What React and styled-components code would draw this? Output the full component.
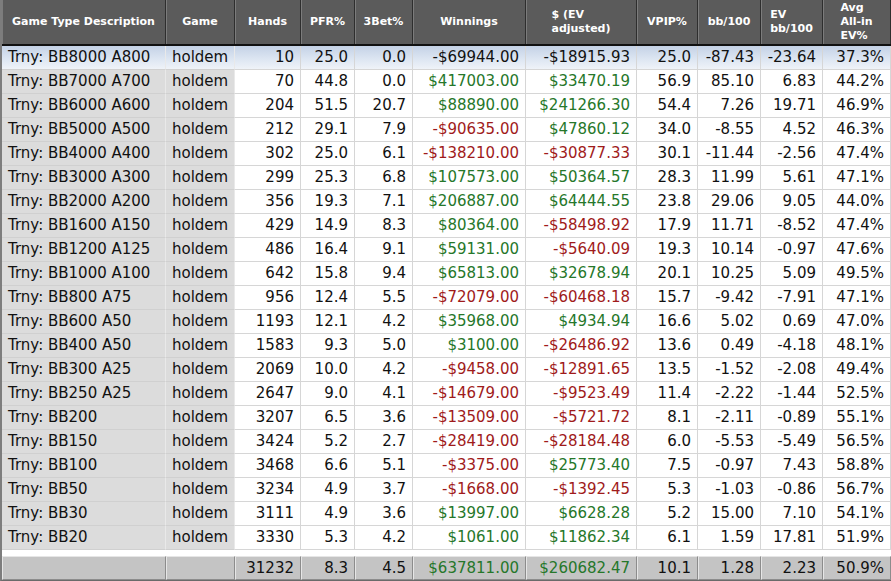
import React from 'react';
import styled, { createGlobalStyle, css } from 'styled-components';

const GlobalStyle = createGlobalStyle`
  html, body {
    margin: 0;
    padding: 0;
    background: #ffffff;
  }
  body {
    font-family: "DejaVu Sans", Verdana, sans-serif;
    overflow: hidden;
  }
`;

const COLS = '164px 69px 66px 54px 58px 113px 111px 61px 63px 62px 68px';

const TONES = {
  pos: '#26772a',
  neg: '#9f1b1b',
};

const Grid = styled.div`
  width: 891px;
  height: 581px;
  box-sizing: border-box;
  border-left: 2px solid #7d7d7d;
  border-bottom: 1px solid #6a6a6a;
  display: flex;
  flex-direction: column;
  background: #ffffff;
`;

const HeaderRow = styled.div`
  display: grid;
  grid-template-columns: ${COLS};
  height: 46px;
  box-sizing: border-box;
  background: #5b5b5b;
  border-bottom: 2px solid #111111;
`;

const HeaderCell = styled.div`
  display: flex;
  align-items: center;
  justify-content: center;
  box-sizing: border-box;
  border-right: 1px solid #2e2e2e;
  box-shadow: inset 1px 0 0 #7c7c7c;
  color: #ffffff;
  font-weight: bold;
  font-size: 11px;
  line-height: 14px;
  padding: 0 3px;

  span {
    text-align: left;
    white-space: pre-line;
  }
`;

const Row = styled.div`
  display: grid;
  grid-template-columns: ${COLS};
  height: 24px;
  ${(p) =>
    p.$selected &&
    css`
      background: linear-gradient(to bottom, #c4d2e6 0%, #dde6f2 55%, #f1f4f9 100%);
    `}
`;

const Cell = styled.div`
  box-sizing: border-box;
  height: 24px;
  line-height: 23px;
  font-size: 15px;
  white-space: nowrap;
  overflow: hidden;
  padding: 0 6px;
  border-bottom: 1px solid #d6d6d6;
  border-right: 1px solid #d6d6d6;
  text-align: ${(p) => (p.$left ? 'left' : 'right')};
  color: ${(p) => TONES[p.$tone] || '#111111'};
  background: ${(p) => (p.$shade && !p.$selected ? '#dcdcdc' : 'transparent')};
  ${(p) =>
    p.$shade &&
    css`
      border-right-color: #e9e9e9;
      border-bottom-color: #d0d0d0;
    `}
`;

const Gap = styled.div`
  height: 6px;
  background: #ffffff;
`;

const TotalRow = styled.div`
  display: grid;
  grid-template-columns: ${COLS};
  height: 24px;
  background: #c4c4c4;
`;

const TotalCell = styled.div`
  box-sizing: border-box;
  height: 24px;
  line-height: 22px;
  font-size: 15px;
  white-space: nowrap;
  padding: 0 6px;
  text-align: right;
  border-top: 1px solid #e6e6e6;
  border-left: 1px solid #e6e6e6;
  border-right: 1px solid #8c8c8c;
  border-bottom: 1px solid #8c8c8c;
  color: ${(p) => TONES[p.$tone] || '#111111'};
`;

const headers = [
  'Game Type Description',
  'Game',
  'Hands',
  'PFR%',
  '3Bet%',
  'Winnings',
  '$ (EV\nadjusted)',
  'VPIP%',
  'bb/100',
  'EV\nbb/100',
  'Avg\nAll-in\nEV%',
];

const rows = [
  ['Trny: BB8000 A800', '10', '25.0', '0.0', '-$69944.00', '-$18915.93', '25.0', '-87.43', '-23.64', '37.3%'],
  ['Trny: BB7000 A700', '70', '44.8', '0.0', '$417003.00', '$33470.19', '56.9', '85.10', '6.83', '44.2%'],
  ['Trny: BB6000 A600', '204', '51.5', '20.7', '$88890.00', '$241266.30', '54.4', '7.26', '19.71', '46.9%'],
  ['Trny: BB5000 A500', '212', '29.1', '7.9', '-$90635.00', '$47860.12', '34.0', '-8.55', '4.52', '46.3%'],
  ['Trny: BB4000 A400', '302', '25.0', '6.1', '-$138210.00', '-$30877.33', '30.1', '-11.44', '-2.56', '47.4%'],
  ['Trny: BB3000 A300', '299', '25.3', '6.8', '$107573.00', '$50364.57', '28.3', '11.99', '5.61', '47.1%'],
  ['Trny: BB2000 A200', '356', '19.3', '7.1', '$206887.00', '$64444.55', '23.8', '29.06', '9.05', '44.0%'],
  ['Trny: BB1600 A150', '429', '14.9', '8.3', '$80364.00', '-$58498.92', '17.9', '11.71', '-8.52', '47.4%'],
  ['Trny: BB1200 A125', '486', '16.4', '9.1', '$59131.00', '-$5640.09', '19.3', '10.14', '-0.97', '47.6%'],
  ['Trny: BB1000 A100', '642', '15.8', '9.4', '$65813.00', '$32678.94', '20.1', '10.25', '5.09', '49.5%'],
  ['Trny: BB800 A75', '956', '12.4', '5.5', '-$72079.00', '-$60468.18', '15.7', '-9.42', '-7.91', '47.1%'],
  ['Trny: BB600 A50', '1193', '12.1', '4.2', '$35968.00', '$4934.94', '16.6', '5.02', '0.69', '47.0%'],
  ['Trny: BB400 A50', '1583', '9.3', '5.0', '$3100.00', '-$26486.92', '13.6', '0.49', '-4.18', '48.1%'],
  ['Trny: BB300 A25', '2069', '10.0', '4.2', '-$9458.00', '-$12891.65', '13.5', '-1.52', '-2.08', '49.4%'],
  ['Trny: BB250 A25', '2647', '9.0', '4.1', '-$14679.00', '-$9523.49', '11.4', '-2.22', '-1.44', '52.5%'],
  ['Trny: BB200', '3207', '6.5', '3.6', '-$13509.00', '-$5721.72', '8.1', '-2.11', '-0.89', '55.1%'],
  ['Trny: BB150', '3424', '5.2', '2.7', '-$28419.00', '-$28184.48', '6.0', '-5.53', '-5.49', '56.5%'],
  ['Trny: BB100', '3468', '6.6', '5.1', '-$3375.00', '$25773.40', '7.5', '-0.97', '7.43', '58.8%'],
  ['Trny: BB50', '3234', '4.9', '3.7', '-$1668.00', '-$1392.45', '5.3', '-1.03', '-0.86', '56.7%'],
  ['Trny: BB30', '3111', '4.9', '3.6', '$13997.00', '$6628.28', '5.2', '15.00', '7.10', '54.1%'],
  ['Trny: BB20', '3330', '5.3', '4.2', '$1061.00', '$11862.34', '6.1', '1.59', '17.81', '51.9%'],
];

const totals = ['31232', '8.3', '4.5', '$637811.00', '$260682.47', '10.1', '1.28', '2.23', '50.9%'];

// money columns are coloured by sign, everything else stays black
const toneOf = (value, idx) => {
  if (idx !== 3 && idx !== 4) return null;
  return value.startsWith('-') ? 'neg' : 'pos';
};

export default function App() {
  return (
    <>
      <GlobalStyle />
      <Grid>
        <HeaderRow>
          {headers.map((h) => (
            <HeaderCell key={h}>
              <span>{h}</span>
            </HeaderCell>
          ))}
        </HeaderRow>

        {rows.map(([desc, ...stats], i) => {
          const selected = i === 0;
          return (
            <Row key={desc} $selected={selected}>
              <Cell $left $shade $selected={selected}>{desc}</Cell>
              <Cell $left $shade $selected={selected}>holdem</Cell>
              {stats.map((v, j) => (
                <Cell key={j} $tone={selected ? null : toneOf(v, j)}>
                  {v}
                </Cell>
              ))}
            </Row>
          );
        })}

        <Gap />

        <TotalRow>
          <TotalCell />
          <TotalCell />
          {totals.map((v, j) => (
            <TotalCell key={j} $tone={toneOf(v, j)}>
              {v}
            </TotalCell>
          ))}
        </TotalRow>
      </Grid>
    </>
  );
}
